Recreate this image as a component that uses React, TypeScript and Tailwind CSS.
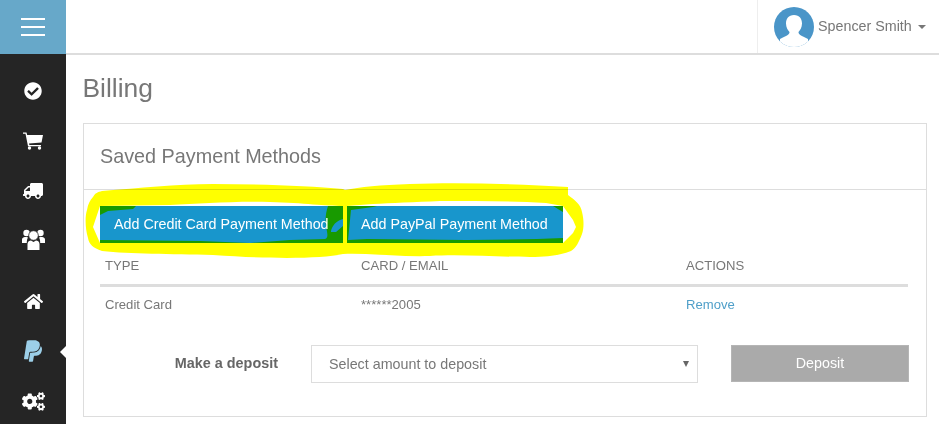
import { FaCheckCircle, FaCogs, FaHome, FaPaypal, FaTruck } from "react-icons/fa";

const FONT = "font-['Liberation_Sans',Arial,sans-serif]";

const Highlight = () => (
  <svg className="absolute left-[-4px] top-[54px] pointer-events-none mix-blend-multiply" width="520" height="90" viewBox="0 0 520 90">
    {/* origin of this drawing is page x 80, y 178 */}
    <path
      fillRule="evenodd"
      fill="#ffff00"
      d="M13 19 C15 15 18 14 22 13 C60 10 95 6 133 6 C180 6 230 8 263 11 L265 12 C280 9 300 7 330 6 C380 4 440 6 488 9 L488 17 C495 22 501 27 502 34 C504 42 504 50 502 56 C499 64 496 70 491 73 C480 77 470 79 450 79 C420 79 380 76 350 78 C320 79 290 75 263 76 C240 81 190 81 133 77 C90 76 50 76 22 73 C13 70 9 66 8 60 C5 50 5 38 7 32 C8 26 10 22 13 19 Z M20 28 L13 49 L20 65 L263 65 L263 28 C245 28 225 25 190 24 C150 23 120 26 90 27 Z M267 28 L267 65 L483 65 L493 55 L496 49 L493 42 L483 28 L466 25 C430 23 395 23 360 23 C335 24 310 25 293 26 Z"
    />
  </svg>
);

const CartIcon = () => (
  <svg width="20" height="18" viewBox="0 0 20 18" fill="#fff">
    <path d="M0 0.500 H3.500 L4.200 3 H20 L18.500 10.500 L6 11.500 L6.400 13 H18 V14.300 H5 L2.500 1.800 H0 Z" />
    <circle cx="6.500" cy="16" r="1.700" />
    <circle cx="16.500" cy="16" r="1.700" />
  </svg>
);

const UsersIcon = () => (
  <svg width="23" height="21" viewBox="0 0 23 21" fill="#fff">
    <circle cx="4.500" cy="4" r="3.200" />
    <circle cx="18.500" cy="4" r="3.200" />
    <path d="M0 14 V10.500 C0 8.500 2 8 4.500 8 L6 8.500 C5 10 4.800 12 4.800 14 Z" />
    <path d="M23 14 V10.500 C23 8.500 21 8 18.500 8 L17 8.500 C18 10 18.200 12 18.200 14 Z" />
    <circle cx="11.500" cy="6.500" r="4.800" stroke="#252525" strokeWidth="0.800" />
    <path d="M5.500 21 V15 C5.500 12.500 7.500 11.500 9 11.500 L11.500 13 L14 11.500 C15.500 11.500 17.500 12.500 17.500 15 V21 Z" />
  </svg>
);

const HighlightedButton = ({ label, width, viewBox, fill }: { label: string; width: string; viewBox: string; fill: string }) => (
  <button className={`relative ${width} h-[37px] bg-[#189a00] text-left text-white text-[14.3px]`}>
    <svg className="absolute inset-0 w-full h-full" viewBox={viewBox}>
      <path d={fill} fill="#1896cc" />
    </svg>
    <span className="relative pl-[14px] whitespace-nowrap">{label}</span>
  </button>
);

const NavIcon = ({ children, className = "text-white" }: { children: React.ReactNode; className?: string }) => (
  <div className={`flex items-center justify-center h-[50px] ${className}`}>{children}</div>
);

export default function App() {
  return (
    <div className={`${FONT} relative flex w-[939px] h-[424px] overflow-hidden bg-white text-[#777]`}>
      <aside className="w-[66px] shrink-0 bg-[#252525]">
        <div className="h-[54px] bg-[#67a8c9] flex flex-col items-center justify-center gap-[6px]">
          <span className="block w-[24px] h-[2px] bg-white" />
          <span className="block w-[24px] h-[2px] bg-white" />
          <span className="block w-[24px] h-[2px] bg-white" />
        </div>
        <div className="pt-[12px]">
          <NavIcon><FaCheckCircle size={18} /></NavIcon>
          <NavIcon><CartIcon /></NavIcon>
          <NavIcon><FaTruck size={20} className="-scale-x-100" /></NavIcon>
          <NavIcon className="text-white -mt-[2px]"><UsersIcon /></NavIcon>
          <NavIcon className="text-white mt-[12px]"><FaHome size={19} /></NavIcon>
          <NavIcon className="relative text-[#9ccfe8]">
            <FaPaypal size={24} />
            <span className="absolute right-0 top-[20px] border-y-[6px] border-r-[6px] border-y-transparent border-r-white" />
          </NavIcon>
          <NavIcon><FaCogs size={23} /></NavIcon>
        </div>
      </aside>

      <div className="flex-1 min-w-0">
        <header className="h-[55px] border-b-2 border-[#ddd] flex justify-end">
          <div className="w-[182px] border-l border-[#eee] flex items-center pl-[16px]">
            <svg width="40" height="40" viewBox="0 0 40 40" className="shrink-0">
              <defs>
                <clipPath id="avatar"><circle cx="20" cy="20" r="20" /></clipPath>
              </defs>
              <g clipPath="url(#avatar)">
                <rect width="40" height="40" fill="#4a95c8" />
                <path d="M20 8 C14.500 8 12 12 12 16.500 C12 20.500 14 23.500 15.500 25 C15.500 27.500 13 28.500 6 32 L6 40 L34 40 L34 32 C27 28.500 24.500 27.500 24.500 25 C26 23.500 28 20.500 28 16.500 C28 12 25.500 8 20 8 Z" fill="#fff" />
              </g>
            </svg>
            <span className="ml-[4px] text-[14.3px] whitespace-nowrap">Spencer Smith</span>
            <span className="ml-[6px] border-x-[4px] border-t-[4px] border-x-transparent border-t-[#777]" />
          </div>
        </header>

        <main className="pl-[17px] pr-[12px]">
          <h1 className="text-[26.400px] leading-[30px] mt-[18px] mb-[20px] -ml-[0.500px]">Billing</h1>
          <section className="relative border border-[#ddd] h-[294px]">
            <h2 className="h-[66px] border-b border-[#ddd] pl-[16px] pt-[20px] text-[19.800px] leading-[24px]">Saved Payment Methods</h2>
            <div className="px-[16px]">
              <div className="flex gap-[4px] mt-[16px]">
                <HighlightedButton
                  label="Add Credit Card Payment Method"
                  width="w-[243px]"
                  viewBox="0 0 243 37"
                  fill="M0 9 L8 5 L33 3 L36 0 L228 0 C226 6 225 12 226 20 C227 26 229 32 225 33 L190 34 L150 37 L100 35 L0 34 Z M231 26 C231 22 235 16 240 14 L243 13 L243 20 L236 26 Z"
                />
                <HighlightedButton
                  label="Add PayPal Payment Method"
                  width="w-[216px]"
                  viewBox="0 0 216 37"
                  fill="M4 4 L26 1 L30 0 L206 0 C210 2 214 5 216 6 L216 32 L190 33 L120 34 L20 33 L1 34 Z"
                />
              </div>
              <table className="w-[808px] mt-[13px] table-fixed">
                <thead>
                  <tr className="border-b-[3px] border-[#ddd] uppercase text-[13.100px] text-left">
                    <th className="font-normal w-[256px] pl-[5px] h-[29px] pb-[8px]">Type</th>
                    <th className="font-normal w-[325px] pl-[5px] pb-[8px]">Card / Email</th>
                    <th className="font-normal pl-[5px] pb-[8px]">Actions</th>
                  </tr>
                </thead>
                <tbody>
                  <tr className="text-[13.100px]">
                    <td className="pl-[5px] h-[38px]">Credit Card</td>
                    <td className="pl-[5px]">******2005</td>
                    <td className="pl-[5px] text-[#4f9fc9]">Remove</td>
                  </tr>
                </tbody>
              </table>
              <div className="flex items-start mt-[22px]">
                <label className="w-[178px] h-[38px] flex items-center justify-end font-bold text-[14.400px] text-[#666]">Make a deposit</label>
                <div className="ml-[33px] w-[387px] h-[38px] border border-[#ddd] flex items-center justify-between pl-[17px] pr-[8px] text-[14.300px]">
                  <span className="pt-[1px]">Select amount to deposit</span>
                  <span className="border-x-[3px] border-t-[6px] border-x-transparent border-t-[#666]" />
                </div>
                <button className="ml-[33px] w-[178px] h-[37px] bg-[#aaa] border border-[#b5b5b5] text-white text-[14.300px]">Deposit</button>
              </div>
            </div>
            <Highlight />
          </section>
        </main>
      </div>
    </div>
  );
}
